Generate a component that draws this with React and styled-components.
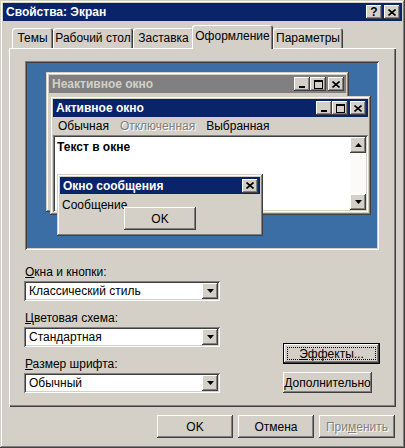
import React from "react";
import styled, { createGlobalStyle, css } from "styled-components";

const GlobalStyle = createGlobalStyle`
  html, body { margin: 0; padding: 0; background: #d4d0c8; }
  body {
    font-family: "Liberation Sans", Arial, sans-serif;
    font-size: 12px;
    color: #000;
    overflow: hidden;
  }
  * { box-sizing: border-box; }
`;

const raised = css`
  box-shadow: inset -1px -1px #404040, inset 1px 1px #ffffff,
    inset -2px -2px #808080, inset 2px 2px #d4d0c8;
`;

const sunken = css`
  box-shadow: inset 1px 1px #808080, inset -1px -1px #ffffff,
    inset 2px 2px #404040, inset -2px -2px #d4d0c8;
`;

const frame = css`
  box-shadow: inset -1px -1px #404040, inset 1px 1px #d4d0c8,
    inset -2px -2px #808080, inset 2px 2px #ffffff;
`;

const Dialog = styled.div`
  width: 405px;
  height: 448px;
  padding: 3px;
  background: #d4d0c8;
  display: flex;
  flex-direction: column;
  ${frame}
`;

const TitleBar = styled.div`
  height: 18px;
  background: #0a246a;
  display: flex;
  align-items: center;
  padding: 0 2px 0 2px;
`;

const Title = styled.div`
  flex: 1;
  color: #fff;
  font-weight: bold;
  font-size: 12px;
  padding-left: 1px;
  white-space: nowrap;
  color: ${(p) => (p.$inactive ? "#d4d0c8" : "#fff")};
`;

const CapButton = styled.div`
  width: 16px;
  height: 14px;
  background: #d4d0c8;
  display: flex;
  align-items: center;
  justify-content: center;
  margin-left: ${(p) => p.$gap || 0}px;
  font-weight: bold;
  font-size: 12px;
  line-height: 1;
  color: #000;
  ${raised}
`;

const TabStrip = styled.div`
  margin-top: 4px;
  height: 23px;
  padding-left: 9px;
  display: flex;
  align-items: flex-end;
`;

const Tab = styled.div`
  position: relative;
  width: ${(p) => p.$w}px;
  height: ${(p) => (p.$active ? 24 : 20)}px;
  margin: ${(p) => (p.$active ? "0 0 -1px -2px" : "0")};
  z-index: ${(p) => (p.$active ? 1 : 0)};
  background: #d4d0c8;
  border-radius: 3px 3px 0 0;
  display: flex;
  align-items: center;
  justify-content: center;
  padding-bottom: ${(p) => (p.$active ? 3 : 0)}px;
  white-space: nowrap;
  box-shadow: inset 1px 1px #ffffff, inset -1px 0 #404040, inset -2px 0 #808080;
`;

const Panel = styled.div`
  margin: 0 6px;
  height: 359px;
  padding: 13px 16px 0 16px;
  box-shadow: inset 1px 1px #ffffff, inset -1px -1px #404040, inset -2px -2px #808080;
`;

const Preview = styled.div`
  width: 354px;
  height: 189px;
  padding: 2px;
  ${sunken}
`;

const Desktop = styled.div`
  position: relative;
  width: 100%;
  height: 100%;
  background: #3a6ea5;
  overflow: hidden;
`;

const MiniWindow = styled.div`
  position: absolute;
  left: ${(p) => p.$x}px;
  top: ${(p) => p.$y}px;
  width: ${(p) => p.$w}px;
  height: ${(p) => p.$h}px;
  background: #d4d0c8;
  padding: 3px;
  display: flex;
  flex-direction: column;
  ${frame}
`;

const MiniTitle = styled.div`
  height: ${(p) => p.$h || 18}px;
  flex-shrink: 0;
  background: ${(p) => (p.$inactive ? "#808080" : "#0a246a")};
  display: flex;
  align-items: center;
  padding: 0 2px 0 2px;
`;

const MenuBar = styled.div`
  height: 18px;
  display: flex;
  align-items: center;
  gap: 11px;
  padding-left: 5px;
`;

const MenuItem = styled.span`
  white-space: nowrap;
  ${(p) =>
    p.$disabled &&
    css`
      color: #808080;
      text-shadow: 1px 1px #ffffff;
    `}
`;

const TextBox = styled.div`
  flex: 1;
  background: #fff;
  display: flex;
  padding: 2px;
  ${sunken}
`;

const TextContent = styled.div`
  flex: 1;
  padding: 3px 2px;
  font-weight: bold;
`;

const ScrollBar = styled.div`
  width: 16px;
  display: flex;
  flex-direction: column;
  justify-content: space-between;
  background: #fbfaf8;
`;

const ArrowButton = styled.div`
  width: 16px;
  height: 16px;
  background: #d4d0c8;
  display: flex;
  align-items: center;
  justify-content: center;
  ${raised}
`;

const MessageBody = styled.div`
  display: flex;
  padding: 0 2px;
`;

const MessageText = styled.div`
  width: 62px;
  margin-top: 4px;
  line-height: 14px;
  white-space: nowrap;
`;

const Button = styled.div`
  width: ${(p) => p.$w}px;
  height: ${(p) => p.$h || 23}px;
  margin-top: ${(p) => p.$mt || 0}px;
  background: #d4d0c8;
  display: flex;
  align-items: center;
  justify-content: center;
  white-space: nowrap;
  flex-shrink: 0;
  ${raised}
  ${(p) =>
    p.$default &&
    css`
      box-shadow: inset 0 0 0 1px #000000, inset -2px -2px #404040,
        inset 2px 2px #ffffff, inset -3px -3px #808080;
      outline: 1px dotted #000;
      outline-offset: -5px;
    `}
  ${(p) =>
    p.$disabled &&
    css`
      color: #808080;
      text-shadow: 1px 1px #ffffff;
    `}
`;

const Settings = styled.div`
  margin-top: 15px;
  display: flex;
  justify-content: space-between;
  align-items: flex-end;
`;

const Fields = styled.div`
  width: 196px;
  margin-left: -1px;
  display: flex;
  flex-direction: column;
  gap: 10px;
`;

const Field = styled.div`
  display: flex;
  flex-direction: column;
`;

const Label = styled.div`
  line-height: 14px;
  margin-bottom: 2px;
  padding-left: 1px;
`;

const Combo = styled.div`
  height: 20px;
  background: #fff;
  display: flex;
  align-items: center;
  padding: 2px;
  ${sunken}
`;

const ComboText = styled.div`
  flex: 1;
  padding-left: 3px;
  white-space: nowrap;
`;

const SideButtons = styled.div`
  display: flex;
  flex-direction: column;
  align-items: flex-start;
  gap: 8px;
`;

const Footer = styled.div`
  margin-top: 8px;
  padding-right: 7px;
  display: flex;
  justify-content: flex-end;
  gap: 5px;
`;

const U = styled.span`
  text-decoration: underline;
`;

const CloseGlyph = () => (
  <svg width="8" height="7" viewBox="0 0 8 7">
    <path d="M0.5 0.5 L7.5 6.5 M7.5 0.5 L0.5 6.5" stroke="#000" strokeWidth="1.6" />
  </svg>
);

const MinGlyph = () => (
  <svg width="8" height="7" viewBox="0 0 8 7">
    <rect x="1" y="5" width="6" height="2" fill="#000" />
  </svg>
);

const MaxGlyph = () => (
  <svg width="9" height="9" viewBox="0 0 9 9">
    <rect x="0.5" y="0.5" width="8" height="8" fill="none" stroke="#000" />
    <rect x="0" y="0" width="9" height="2" fill="#000" />
  </svg>
);

const Arrow = ({ up }) => (
  <svg width="7" height="4" viewBox="0 0 7 4">
    <polygon points={up ? "3.5,0 7,4 0,4" : "0,0 7,0 3.5,4"} fill="#000" />
  </svg>
);

const WindowButtons = () => (
  <>
    <CapButton>
      <MinGlyph />
    </CapButton>
    <CapButton>
      <MaxGlyph />
    </CapButton>
    <CapButton $gap={2}>
      <CloseGlyph />
    </CapButton>
  </>
);

const ComboBox = ({ label, value }) => (
  <Field>
    <Label>{label}</Label>
    <Combo>
      <ComboText>{value}</ComboText>
      <ArrowButton>
        <Arrow />
      </ArrowButton>
    </Combo>
  </Field>
);

const App = () => {
  return (
    <>
      <GlobalStyle />
      <Dialog>
        <TitleBar>
          <Title>Свойства: Экран</Title>
          <CapButton>?</CapButton>
          <CapButton $gap={2}>
            <CloseGlyph />
          </CapButton>
        </TitleBar>

        <TabStrip>
          <Tab $w={41}>Темы</Tab>
          <Tab $w={80}>Рабочий стол</Tab>
          <Tab $w={61}>Заставка</Tab>
          <Tab $w={81} $active>
            Оформление
          </Tab>
          <Tab $w={70}>Параметры</Tab>
        </TabStrip>

        <Panel>
          <Preview>
            <Desktop>
              <MiniWindow $x={19} $y={9} $w={303} $h={140}>
                <MiniTitle $inactive>
                  <Title $inactive>Неактивное окно</Title>
                  <WindowButtons />
                </MiniTitle>
              </MiniWindow>

              <MiniWindow $x={23} $y={33} $w={321} $h={119}>
                <MiniTitle>
                  <Title>Активное окно</Title>
                  <WindowButtons />
                </MiniTitle>
                <MenuBar>
                  <MenuItem>Обычная</MenuItem>
                  <MenuItem $disabled>Отключенная</MenuItem>
                  <MenuItem>Выбранная</MenuItem>
                </MenuBar>
                <TextBox>
                  <TextContent>Текст в окне</TextContent>
                  <ScrollBar>
                    <ArrowButton>
                      <Arrow up />
                    </ArrowButton>
                    <ArrowButton>
                      <Arrow />
                    </ArrowButton>
                  </ScrollBar>
                </TextBox>
              </MiniWindow>

              <MiniWindow $x={30} $y={111} $w={206} $h={62}>
                <MiniTitle $h={17}>
                  <Title>Окно сообщения</Title>
                  <CapButton>
                    <CloseGlyph />
                  </CapButton>
                </MiniTitle>
                <MessageBody>
                  <MessageText>Сообщение</MessageText>
                  <Button $w={72} $mt={13}>
                    OK
                  </Button>
                </MessageBody>
              </MiniWindow>
            </Desktop>
          </Preview>

          <Settings>
            <Fields>
              <ComboBox
                label={
                  <>
                    <U>О</U>кна и кнопки:
                  </>
                }
                value="Классический стиль"
              />
              <ComboBox
                label={
                  <>
                    <U>Ц</U>ветовая схема:
                  </>
                }
                value="Стандартная"
              />
              <ComboBox
                label={
                  <>
                    <U>Р</U>азмер шрифта:
                  </>
                }
                value="Обычный"
              />
            </Fields>
            <SideButtons>
              <Button $w={97} $h={21} $default>
                <span>
                  <U>Э</U>ффекты...
                </span>
              </Button>
              <Button $w={89} $h={21}>
                <span>
                  <U>Д</U>ополнительно
                </span>
              </Button>
            </SideButtons>
          </Settings>
        </Panel>

        <Footer>
          <Button $w={76}>OK</Button>
          <Button $w={76}>Отмена</Button>
          <Button $w={76} $disabled>
            <span>
              При<U>м</U>енить
            </span>
          </Button>
        </Footer>
      </Dialog>
    </>
  );
};

export default App;
